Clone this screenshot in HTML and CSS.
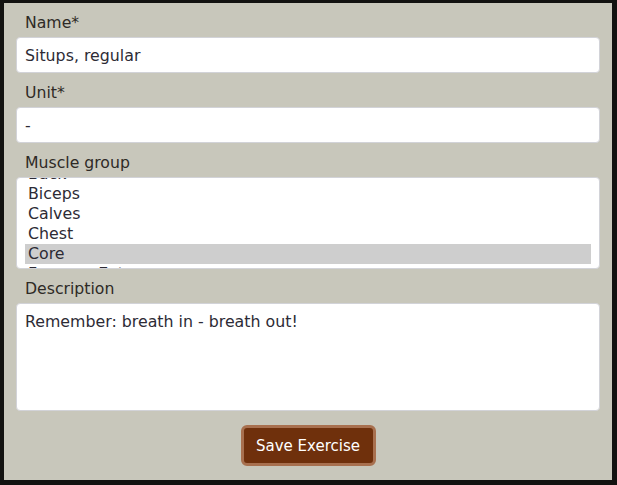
FILE: index.html
```html
<!DOCTYPE html>
<html lang="en">
<head>
<meta charset="utf-8">
<title>Exercise</title>
<link rel="stylesheet" href="styles.css">
</head>
<body>
<div class="frame">
  <form class="form">
    <div class="field">
      <label class="label" for="name">Name*</label>
      <input class="input" id="name" type="text" value="Situps, regular">
    </div>
    <div class="field">
      <label class="label" for="unit">Unit*</label>
      <input class="input" id="unit" type="text" value="-">
    </div>
    <div class="field">
      <span class="label">Muscle group</span>
      <div class="listbox">
        <ul class="list">
          <li class="option">Back</li>
          <li class="option">Biceps</li>
          <li class="option">Calves</li>
          <li class="option">Chest</li>
          <li class="option selected">Core</li>
          <li class="option">Forearm Extensors</li>
          <li class="option">Glutes</li>
        </ul>
      </div>
    </div>
    <div class="field">
      <label class="label" for="desc">Description</label>
      <textarea class="textarea" id="desc">Remember: breath in - breath out!</textarea>
    </div>
    <div class="actions">
      <button class="button" type="button">Save Exercise</button>
    </div>
  </form>
</div>
</body>
</html>
```
FILE: styles.css
```css
* { box-sizing: border-box; }
html, body { margin: 0; padding: 0; }
body {
  font-family: "DejaVu Sans", "Open Sans", sans-serif;
  color: #333;
}
.frame {
  width: 617px;
  height: 485px;
  border-style: solid;
  border-color: #121210;
  border-width: 3px 5px 5px 4px;
  background: #c8c7bb;
  padding: 10px 12px 14px 12px;
}
.form {
  display: flex;
  flex-direction: column;
}
.field {
  display: flex;
  flex-direction: column;
  margin-bottom: 10px;
}
.label {
  display: block;
  font-size: 15.7px;
  line-height: 20px;
  padding-left: 9px;
  margin-bottom: 4px;
  color: #2e2a26;
}
.input, .textarea {
  font-family: inherit;
  font-size: 15.8px;
  color: #2d2b35;
  background: #fff;
  border: 1px solid #d2d3d8;
  border-radius: 4px;
  padding: 0 8px;
  margin: 0;
  outline: none;
  width: 100%;
}
.input { height: 36px; }
.textarea {
  height: 108px;
  resize: none;
  padding: 8px 8px;
  line-height: 20px;
}
.listbox {
  height: 92px;
  border: 1px solid #d2d3d8;
  border-radius: 4px;
  background: #fff;
  padding: 0 8px;
  overflow: hidden;
}
.list {
  list-style: none;
  margin: -14px 0 0 0;
  padding: 0;
}
.option {
  font-size: 15.8px;
  line-height: 20px;
  height: 20px;
  padding-left: 3px;
  color: #2d2b35;
  white-space: nowrap;
}
.option.selected { background: #cecece; }
.actions {
  display: flex;
  justify-content: center;
  margin-top: 4px;
}
.button {
  font-family: inherit;
  font-size: 15px;
  color: #fff;
  background: #6f300c;
  border: 3px solid #a8704f;
  border-radius: 6px;
  height: 41px;
  width: 135px;
  padding: 0 10px;
}
```
